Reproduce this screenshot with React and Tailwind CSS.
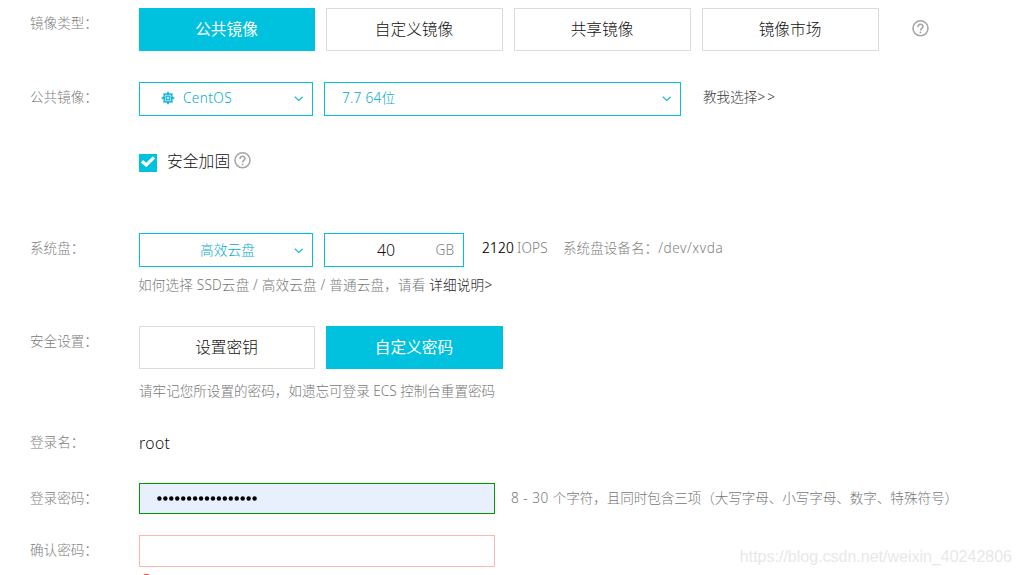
import React from "react";

function Row({ label, className, children }) {
  return (
    <div className={`flex items-start ${className}`}>
      <div className="w-[109px] shrink-0 pt-[5px] text-[#808080]">{label}</div>
      {children}
    </div>
  );
}

function Option({ active, wide, children }) {
  return (
    <button
      className={`flex h-[43px] shrink-0 items-center justify-center border pb-[2px] pr-px text-[15.7px] ${
        wide ? "w-[177px]" : "w-[176px]"
      } ${active ? "border-[#00c1de] bg-[#00c1de] font-normal text-white" : "border-[#dcdcdc] bg-white text-[#111]"}`}
    >
      {children}
    </button>
  );
}

function Chevron() {
  return (
    <svg width="10" height="6" viewBox="0 0 10 6" className="mt-[2px] shrink-0" fill="none" stroke="#1cbfdc" strokeWidth="1.3">
      <path d="M0.8 0.8 L4.7 4.4 L8.6 0.8" />
    </svg>
  );
}

function Help() {
  return (
    <svg width="17" height="17" viewBox="0 0 17 17" className="shrink-0" fill="none" stroke="#a6a6a6" strokeWidth="1.6">
      <circle cx="8.5" cy="8.3" r="7.5" />
      <path d="M6 6.9 C6 3.4 11 3.5 11 6.6 C11 8.4 8.5 8.4 8.5 10.6" />
      <path d="M8.5 11.7 V13.3" />
    </svg>
  );
}

function Gear() {
  const angles = [0, 45, 90, 135, 180, 225, 270, 315];
  return (
    <svg width="14" height="14" viewBox="-7 -7 14 14" className="shrink-0">
      {angles.map((a) => (
        <g key={a} transform={`rotate(${a})`}>
          <path d="M-1.7 -4.6 L0 -6.8 L1.7 -4.6 L1.2 -2 L0 -0.6 L-1.2 -2 Z" fill="#22b3da" />
        </g>
      ))}
      <rect x="-2.7" y="-2.7" width="5.4" height="5.4" fill="none" stroke="#c9eef7" strokeWidth="0.6" />
      <circle r="0.8" fill="#d5f2f8" />
    </svg>
  );
}

export default function App() {
  return (
    <div className="relative h-[575px] w-[1021px] overflow-hidden bg-white pl-[30px] pt-2 font-['Noto_Sans','Noto_Sans_CJK_SC',sans-serif] text-[13.6px] font-light leading-5 whitespace-nowrap">
      <Row label="镜像类型：" className="h-[74px]">
        <div className="flex gap-[11px]">
          <Option active>公共镜像</Option>
          <Option wide>自定义镜像</Option>
          <Option wide>共享镜像</Option>
          <Option wide>镜像市场</Option>
        </div>
        <div className="ml-[33px] mt-[12px]"><Help /></div>
      </Row>

      <Row label="公共镜像：" className="h-[71px]">
        <div className="flex h-[34px] w-[174px] items-center border border-[#00c1de] pb-0.5 pl-[21px] pr-[8px] text-[#00abd0]">
          <Gear />
          <span className="ml-[8px] flex-1 tracking-[0.4px]">CentOS</span>
          <Chevron />
        </div>
        <div className="ml-[11px] flex h-[34px] w-[357px] items-center justify-between border border-[#00c1de] pb-0.5 pl-[17px] pr-[8px] text-[#00abd0]">
          <span className="tracking-[0.25px]">7.7 64位</span>
          <Chevron />
        </div>
        <span className="ml-[22px] mt-[5px] text-[#3a3a3a]">教我选择<span className="tracking-[2px]">&gt;&gt;</span></span>
      </Row>

      <div className="flex h-[80px] items-start pl-[109px]">
        <div className="mt-px flex size-[18px] items-center justify-center bg-[#00c1de]">
          <svg width="16" height="14" viewBox="0 0 16 14" className="mb-[2px]" fill="none" stroke="#fff" strokeWidth="3.2">
            <path d="M2 6.2 L6.3 10 L14 2.4" />
          </svg>
        </div>
        <span className="ml-[10px] mt-[-2px] text-[15.8px] text-[#111]">安全加固</span>
        <div className="ml-[4px] mt-[-1px]"><Help /></div>
      </div>

      <Row label="系统盘：" className="h-[42px]">
        <div className="flex h-[34px] w-[174px] items-center border border-[#00c1de] pb-px pl-[60px] pr-[8px] text-[#00abd0]">
          <span className="flex-1 tracking-[0.15px]">高效云盘</span>
          <Chevron />
        </div>
        <div className="ml-[11px] flex h-[34px] w-[140px] items-center justify-between border border-[#00c1de] pl-[52px] pr-[9px]">
          <span className="text-[15.9px] text-[#111]">40</span>
          <span className="text-[#808080]">GB</span>
        </div>
        <div className="ml-[18px] mt-[5px] flex text-[#808080]">
          <span className="w-[35px] tracking-[0.25px] text-black [-webkit-text-stroke:0.2px_black]">2120</span>
          <span className="w-[31px] tracking-[0.2px]">IOPS</span>
        </div>
        <div className="ml-[15px] mt-[5px] text-[#808080]">系统盘设备名：<span className="tracking-[0.6px]">/dev/xvda</span></div>
      </Row>

      <div className="h-[51px] pl-[108px] tracking-[0.18px] text-[#777]">
        如何选择 SSD云盘 / 高效云盘 / 普通云盘，请看 <span className="text-[#222]">详细说明&gt;</span>
      </div>

      <Row label="安全设置：" className="h-[55px]">
        <div className="flex gap-[11px]">
          <Option>设置密钥</Option>
          <Option active wide>自定义密码</Option>
        </div>
      </Row>

      <div className="h-[46px] pl-[109px] tracking-[-0.02px] text-[#777]">请牢记您所设置的密码，如遗忘可登录 ECS 控制台重置密码</div>

      <Row label="登录名：" className="h-[56px]">
        <span className="mt-[6px] text-[15.7px] tracking-[0.4px] text-[#111]">root</span>
      </Row>

      <Row label="登录密码：" className="h-[52px]">
        <div className="flex h-[31px] w-[356px] items-center border border-[#090] bg-[#e8effd] pb-px pl-[17px]">
          <svg width="101" height="5" viewBox="0 0 101 5" fill="#000">
            {Array.from({ length: 17 }, (_, i) => (
              <circle key={i} cx={2.4 + i * 5.95} cy="2.5" r="2.2" />
            ))}
          </svg>
        </div>
        <span className="ml-[16px] mt-[5px] text-[#777]"><span className="tracking-[0.5px]">8 - 30 </span><span className="tracking-[-0.09px]">个字符，且同时包含三项（大写字母、小写字母、数字、特殊符号）</span></span>
      </Row>

      <Row label="确认密码：" className="h-[39px]">
        <div className="h-[32px] w-[356px] border border-[#ffb6b0]" />
      </Row>
      <div className="ml-[110px] size-[13px] rounded-full bg-[#f03b30]" />

      <div className="absolute bottom-[8px] right-[9px] font-['Liberation_Sans',sans-serif] text-[16px] font-normal text-[#e8e8e8]">
        https://blog.csdn.net/weixin_40242806
      </div>
    </div>
  );
}
